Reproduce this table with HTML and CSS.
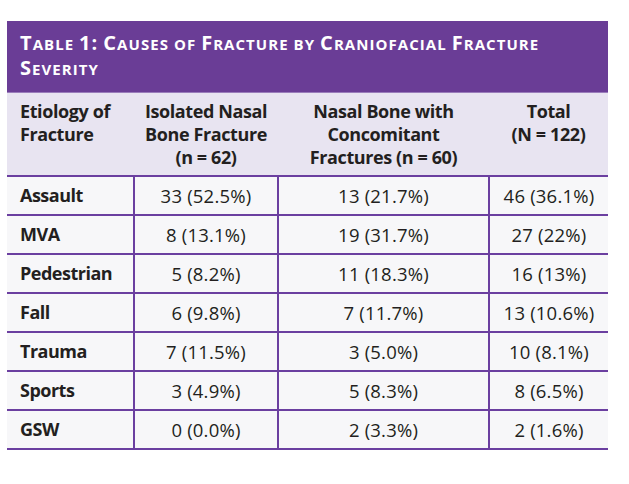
FILE: index.html
```html
<!DOCTYPE html>
<html>
<head>
<meta charset="utf-8">
<link rel="stylesheet" href="styles.css">
</head>
<body>
<div class="card">
  <div class="title"><span class="cap">T</span>able <span class="cap">1:</span> <span class="cap">C</span>auses of <span class="cap">F</span>racture by <span class="cap">C</span>raniofacial <span class="cap">F</span>racture <span class="cap">S</span>everity</div>
  <table class="data">
    <colgroup>
      <col class="c1"><col class="c2"><col class="c3"><col class="c4">
    </colgroup>
    <thead>
      <tr>
        <th class="first">Etiology of<br>Fracture</th>
        <th>Isolated Nasal<br>Bone Fracture<br>(n = 62)</th>
        <th>Nasal Bone with<br>Concomitant<br>Fractures (n = 60)</th>
        <th>Total<br>(N = 122)</th>
      </tr>
    </thead>
    <tbody>
      <tr><td class="first">Assault</td><td>33 (52.5%)</td><td>13 (21.7%)</td><td>46 (36.1%)</td></tr>
      <tr><td class="first">MVA</td><td>8 (13.1%)</td><td>19 (31.7%)</td><td>27 (22%)</td></tr>
      <tr><td class="first">Pedestrian</td><td>5 (8.2%)</td><td>11 (18.3%)</td><td>16 (13%)</td></tr>
      <tr><td class="first">Fall</td><td>6 (9.8%)</td><td>7 (11.7%)</td><td>13 (10.6%)</td></tr>
      <tr><td class="first">Trauma</td><td>7 (11.5%)</td><td>3 (5.0%)</td><td>10 (8.1%)</td></tr>
      <tr><td class="first">Sports</td><td>3 (4.9%)</td><td>5 (8.3%)</td><td>8 (6.5%)</td></tr>
      <tr><td class="first">GSW</td><td>0 (0.0%)</td><td>2 (3.3%)</td><td>2 (1.6%)</td></tr>
    </tbody>
  </table>
</div>
</body>
</html>
```

FILE: styles.css
```css
html, body {
  margin: 0;
  padding: 0;
  background: #ffffff;
}
body {
  font-family: "Open Sans", "Noto Sans", sans-serif;
  color: #231f20;
}
.card {
  margin: 21px 0 0 7px;
  width: 601px;
}
.title {
  background: #6a3d96;
  color: #ffffff;
  font-weight: 700;
  text-transform: uppercase;
  font-size: 15px;
  line-height: 23px;
  letter-spacing: 1.05px;
  padding: 10px 13px 15px;
  height: 46px;
  border-bottom: 1px solid #9a7cbb;
}
.title .cap {
  font-size: 20px;
}
.data {
  width: 601px;
  border-collapse: collapse;
  table-layout: fixed;
  font-size: 18.5px;
}
.c1 { width: 127px; }
.c2 { width: 144px; }
.c3 { width: 211px; }
.c4 { width: 119px; }
.data th {
  background: #e8e4f1;
  font-weight: 700;
  font-size: 18px;
  line-height: 23px;
  vertical-align: top;
  text-align: center;
  padding: 7px 0 6px;
  height: 69px;
  border-bottom: 2px solid #6b3fa0;
  letter-spacing: -0.4px;
}
.data td {
  background: #f7f7f9;
  text-align: center;
  height: 37px;
  padding: 0;
  line-height: 23px;
  border-bottom: 2px solid #6b3fa0;
  border-left: 2px solid #6b3fa0;
  letter-spacing: 0.2px;
}
.data th.first,
.data td.first {
  text-align: left;
  padding-left: 13px;
  border-left: none;
}
.data td.first {
  font-weight: 700;
  font-size: 18px;
  letter-spacing: -0.5px;
}
```
